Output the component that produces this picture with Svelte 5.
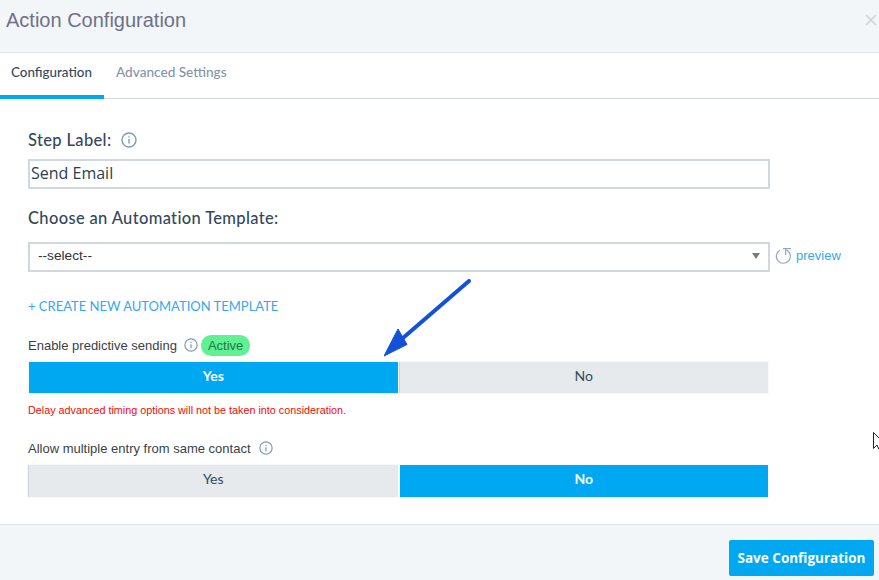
<script>
  const tabs = ['Configuration', 'Advanced Settings'];
</script>

<div class="modal">
  <header class="head">
    <h1>Action Configuration</h1>
    <svg class="close" width="12" height="12" viewBox="0 0 12 12"><path d="M1 1l10 10M11 1L1 11" stroke="#cfd2d5" stroke-width="1.5" fill="none"/></svg>
  </header>
  <nav class="tabs">
    {#each tabs as t, i}
      <div class="tab" class:active={i === 0}>{t}</div>
    {/each}
  </nav>
  <main class="body">
    <div class="label big first">Step Label:
      <svg class="info i16" viewBox="0 0 16 16"><circle cx="8" cy="8" r="7" /><path d="M8 7v4.6M8 4.2v1.4" /></svg>
    </div>
    <div class="field text">Send Email</div>
    <div class="label big second">Choose an Automation Template:</div>
    <div class="select-row">
      <div class="field select">--select--<span class="caret"></span></div>
      <svg class="refresh" width="17" height="16" viewBox="0 0 17 16"><path d="M4.8 2.2A7 7 0 1 0 11.5 2" fill="none" stroke="#8fa9c0" stroke-width="1.2"/><path d="M8 .7H16M10.7 .7V7" fill="none" stroke="#8fa9c0" stroke-width="1.2"/></svg>
      <span class="preview">preview</span>
    </div>
    <div class="create">+ CREATE NEW AUTOMATION TEMPLATE</div>
    <div class="label small enable">Enable predictive sending
      <svg class="info i14" viewBox="0 0 16 16"><circle cx="8" cy="8" r="7" /><path d="M8 7v4.6M8 4.2v1.4" /></svg>
      <span class="badge">Active</span>
    </div>
    <div class="toggle">
      <div class="opt on">Yes</div>
      <div class="opt">No</div>
    </div>
    <div class="err">Delay advanced timing options will not be taken into consideration.</div>
    <div class="label small allow">Allow multiple entry from same contact
      <svg class="info i14" viewBox="0 0 16 16"><circle cx="8" cy="8" r="7" /><path d="M8 7v4.6M8 4.2v1.4" /></svg>
    </div>
    <div class="toggle two">
      <div class="opt">Yes</div>
      <div class="opt on">No</div>
    </div>
  </main>
  <footer class="foot">
    <button class="save">Save Configuration</button>
  </footer>

  <svg class="arrow" width="90" height="80" viewBox="0 0 90 80">
    <path d="M85 2L12 65" stroke="#1352d8" stroke-width="4" stroke-linecap="round" fill="none"/>
    <path d="M0 77L14 50L23 65.5Z" fill="#1352d8" stroke="#1352d8" stroke-width="1" stroke-linejoin="round"/>
  </svg>
  <svg class="cursor" width="7" height="18" viewBox="0 0 7 18">
    <path d="M0.5 0.5V16.5L4 13L6 17.5M0.5 0.5L7 7" fill="#fff" stroke="#222" stroke-width="1"/>
  </svg>
</div>

<style>
  :global(body) { margin: 0; background: #fff; }
  .modal { width: 879px; height: 580px; position: relative; overflow: hidden; display: flex; flex-direction: column; font-family: "Liberation Sans", Arial, sans-serif; box-sizing: border-box; }
  .head { height: 52px; flex: none; background: #f3f6f8; border-bottom: 1px solid #e2e5e8; display: flex; align-items: center; justify-content: space-between; padding: 0 2px 0 6px; }
  h1 { margin: 0; font-weight: 400; font-size: 20px; color: #6e7188; position: relative; top: -6px; }
  .close { position: relative; top: -6px; }
  .tabs { height: 46px; flex: none; border-bottom: 1px solid #cfd8e0; display: flex; box-sizing: border-box; }
  .tab { font-family: Lato, sans-serif; font-size: 13.6px; font-weight: 500; color: #8494a8; padding: 0 12px; line-height: 38px; height: 46px; box-sizing: border-box; }
  .tab.active { color: #34495e; width: 104px; padding: 0 0 0 11px; border-bottom: 4px solid #00a8f2; font-size: 13.4px; }
  .body { flex: 1; padding: 0 0 0 28px; }
  .label { color: #34404e; display: flex; align-items: center; }
  .big { font-family: Lato, sans-serif; font-size: 16.5px; font-weight: 500; letter-spacing: 0.35px; height: 20px; color: #33475b; }
  .first { margin-top: 31px; }
  .second { margin-top: 19px; }
  .small { font-size: 13px; height: 16px; color: #3a3f47; }
  .info { fill: none; stroke: #7f9cb5; stroke-width: 1.4; margin-left: 8px; }
  .i16 { width: 16px; height: 16px; margin-left: 10px; }
  .i14 { width: 14px; height: 14px; }
  .field { width: 742px; box-sizing: border-box; border: 2px solid #cfd8e0; background: #fff; }
  .text { height: 30px; margin-top: 9px; font-family: "Open Sans", sans-serif; font-size: 16px; color: #2c3e50; padding-left: 1px; line-height: 24px; }
  .select-row { display: flex; align-items: center; margin-top: 14px; }
  .select { height: 30px; font-size: 13.7px; color: #333; padding-left: 8px; line-height: 24px; position: relative; }
  .caret { position: absolute; right: 8px; top: 9px; border: 4px solid transparent; border-top: 6px solid #7a7a7a; border-bottom: 0; }
  .refresh { margin-left: 5px; margin-bottom: 2px; }
  .preview { font-size: 13px; color: #35a9f0; margin-left: 4px; margin-bottom: 4px; }
  .create { font-family: Lato, sans-serif; font-size: 13px; color: #35a9f0; margin-top: 26px; height: 17px; line-height: 17px; }
  .enable { margin-top: 19px; height: 22px; }
  .enable .info { margin-left: 7px; }
  .badge { background: #62f094; color: #1a7a3c; border-radius: 10px; height: 21px; line-height: 21px; padding: 0 7px; margin-left: 3px; font-size: 13px; }
  .toggle { display: flex; width: 742px; margin-left: -1px; height: 33px; margin-top: 5px; font-family: Lato, sans-serif; font-size: 14px; box-sizing: border-box; background: #f6f8f9; padding: 1px; }
  .opt { flex: 1; display: flex; align-items: center; justify-content: center; background: #e6eaed; color: #34495e; border-left: 1px solid #ccd5de; padding-bottom: 4px; }
  .opt + .opt { margin-left: 1px; }
  .on { background: #00a8f2; color: #fff; font-weight: 700; border-left: 1px solid #f6f8f9; }
  .err { font-size: 10.8px; color: #ee0b0b; margin-top: 10px; height: 12px; line-height: 12px; }
  .allow { margin-top: 24px; }
  .two { margin-top: 8px; height: 34px; }
  .two .opt { padding-bottom: 6px; }
  .foot { height: 56px; flex: none; background: #f3f6f8; border-top: 1px solid #e2e5e8; display: flex; justify-content: flex-end; padding: 15px 5px 0 0; box-sizing: border-box; }
  .save { width: 145px; height: 36px; background: #00a8f2; color: #fff; border: 0; border-radius: 2px; font-family: "Open Sans", sans-serif; font-weight: 700; font-size: 13.5px; padding: 0 0 1px; }
  .arrow { position: absolute; left: 384px; top: 279px; }
  .cursor { position: absolute; left: 873px; top: 432px; }
</style>
